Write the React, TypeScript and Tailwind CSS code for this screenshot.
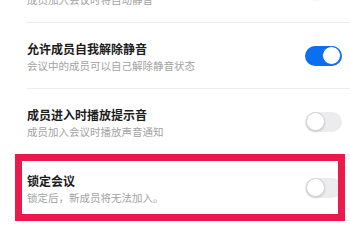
import React from "react";

interface Setting {
  id: string;
  title: string;
  desc: string;
  on: boolean;
  marked?: boolean;
}

const settings: Setting[] = [
  { id: "mute", title: "成员入会时静音", desc: "成员加入会议时将自动静音", on: false },
  { id: "unmute", title: "允许成员自我解除静音", desc: "会议中的成员可以自己解除静音状态", on: true },
  { id: "sound", title: "成员进入时播放提示音", desc: "成员加入会议时播放声音通知", on: false },
  { id: "lock", title: "锁定会议", desc: "锁定后，新成员将无法加入。", on: false, marked: true },
];

// --- Toggle ---
const Toggle = ({ on }: { on: boolean }) => (
  <div
    className={`flex h-[20px] w-[37px] shrink-0 items-center rounded-full p-[1px] ${
      on ? "justify-end bg-[#0b6ff2]" : "justify-start bg-[#ececee]"
    }`}
  >
    <div
      className={`h-[19px] w-[19px] rounded-full bg-white ${
        on ? "border-[1.5px] border-[#0b6ff2]" : "border border-[#d4d4d4] shadow-[0_1px_2px_rgba(0,0,0,0.15)]"
      }`}
    />
  </div>
);

// --- Row ---
const SettingRow = ({ item }: { item: Setting }) => (
  <div className="relative pl-[27px]">
    <div className="flex h-[66px] items-center border-b border-[#ececec] pr-[8px]">
      <div className="flex h-full flex-1 flex-col pt-[18px]">
        <p className="text-[12px] leading-[16px] font-bold text-[#1c1c1c]">{item.title}</p>
        <p className="mt-[2px] text-[10.5px] leading-[14px] text-[#a3a3a3]">{item.desc}</p>
      </div>
      <Toggle on={item.on} />
    </div>
    {item.marked && (
      <div className="pointer-events-none absolute top-[-1px] left-[15px] right-[5px] h-[67px] border-[7px] border-[#ec1a4c]" />
    )}
  </div>
);

export default function App() {
  return (
    <div
      className="h-[241px] w-[350px] overflow-hidden bg-white"
      style={{ fontFamily: '"Noto Sans CJK SC", "Noto Sans", sans-serif' }}
    >
      <div className="-mt-[43px]">
        {settings.map((item) => (
          <SettingRow key={item.id} item={item} />
        ))}
      </div>
    </div>
  );
}
